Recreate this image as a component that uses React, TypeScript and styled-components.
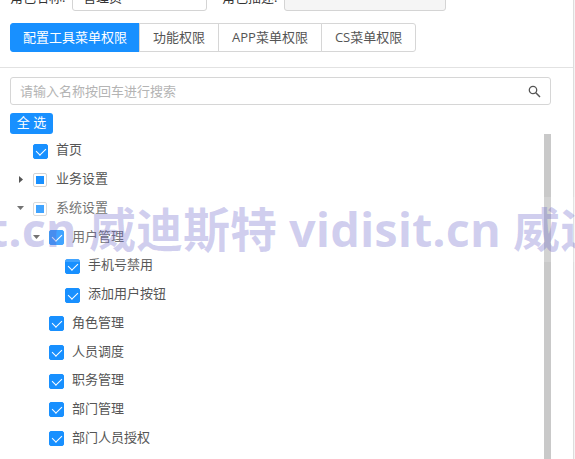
import React, { useEffect, useRef, useState } from "react";
import styled, { createGlobalStyle } from "styled-components";

const GlobalStyle = createGlobalStyle`
  * { box-sizing: border-box; }
  body {
    margin: 0;
    background: #fff;
    color: #555;
    font: 13px/20px "Open Sans", "Noto Sans CJK SC", sans-serif;
  }
  button, input { font: inherit; color: inherit; }
`;

const Page = styled.main`
  position: relative;
  display: flex;
  height: 100vh;
  overflow: hidden;
`;

const Panel = styled.div`
  flex: 1;
  min-width: 0;
  display: flex;
  flex-direction: column;
  border-right: 1px solid #ddd;
`;

const Edge = styled.div`
  width: 1px;
  background: #f4f4f4;
`;

const FormRow = styled.div`
  display: flex;
  align-items: flex-end;
  height: 11px;
  padding-left: 10px;
  gap: 15px;
`;

const Field = styled.label<{ $width: number }>`
  display: flex;
  align-items: center;
  gap: 4px;
  color: #333;

  input {
    width: ${(p) => p.$width}px;
    height: 28px;
    padding: 0 10px 2px;
    border: 1px solid #d4d4d4;
    border-radius: 3px;
    background: #fff;
  }
  input:disabled { background: #f5f5f5; }
`;

const FieldName = styled.span`
  width: 58px;
  white-space: nowrap;
`;

const Tabs = styled.div`
  display: flex;
  padding: 12px 10px 15px;
  border-bottom: 1px solid #e2e2e2;
`;

const Tab = styled.button<{ $active?: boolean }>`
  height: 29px;
  padding: 0 13px 2px;
  border: 1px solid ${(p) => (p.$active ? "#1890ff" : "#d6d6d6")};
  margin-left: -1px;
  background: ${(p) => (p.$active ? "#1890ff" : "#fff")};
  color: ${(p) => (p.$active ? "#fff" : "#555")};
  line-height: 20px;
  white-space: nowrap;
  &:first-child {
    border-radius: 3px 0 0 3px;
    margin-left: 0;
    padding: 0 12px 2px;
  }
  &:last-child { border-radius: 0 3px 3px 0; }
`;

const Content = styled.section`
  flex: 1;
  min-height: 0;
  display: flex;
  flex-direction: column;
  align-items: flex-start;
  padding: 9px 22px 0 10px;
`;

const SearchBox = styled.div`
  display: flex;
  align-items: center;
  align-self: stretch;
  height: 28px;
  padding: 0 9px;
  border: 1px solid #d6d6d6;
  border-radius: 3px;

  input {
    flex: 1;
    min-width: 0;
    padding: 0;
    border: 0;
    outline: 0;
    background: none;
  }
  input::placeholder { color: #b4b4b4; opacity: 1; }
  button {
    display: flex;
    padding: 0;
    border: 0;
    background: none;
  }
`;

const SelectAll = styled.button`
  width: 43px;
  height: 21px;
  margin-top: 8px;
  padding: 0 0 2px;
  border: 0;
  border-radius: 3px;
  background: #1890ff;
  color: #fff;
  line-height: 19px;
`;

const TreeArea = styled.div`
  flex: 1;
  min-height: 0;
  align-self: stretch;
  display: flex;
`;

const Tree = styled.ul`
  flex: 1;
  display: flex;
  flex-direction: column;
  margin: 0;
  padding: 2px 0 7px;
  list-style: none;
`;

const ScrollThumb = styled.div`
  width: 7px;
  background: #c9c9c9;
`;

const Row = styled.li<{ $level: number }>`
  flex: 1;
  min-height: 28px;
  display: flex;
  align-items: center;
  padding-left: ${(p) => p.$level * 16 + 6}px;
`;

const Toggle = styled.button`
  display: flex;
  width: 17px;
  padding: 0;
  border: 0;
  background: none;
`;

const Spacer = styled.span`
  width: 17px;
`;

const Option = styled.label`
  display: flex;
  align-items: center;
  gap: 8px;
  padding-bottom: 2px;
`;

const Check = styled.input`
  appearance: none;
  position: relative;
  width: 15px;
  height: 15px;
  margin: 4px 0 0;
  border: 1px solid #d4d4d4;
  border-radius: 2px;
  background: #fff;

  &:checked { background: #1890ff; border-color: #1890ff; }
  &:checked::after {
    content: "";
    position: absolute;
    left: 4px;
    top: 1px;
    width: 5px;
    height: 8px;
    border: solid #fff;
    border-width: 0 1px 1px 0;
    transform: rotate(45deg);
  }
  &:indeterminate { width: 14px; height: 14px; margin-right: 1px; }
  &:indeterminate::after {
    content: "";
    position: absolute;
    inset: 2px;
    background: #1890ff;
  }
`;

const Watermark = styled.div`
  position: absolute;
  top: 197px;
  left: 0;
  right: 0;
  height: 65px;
  display: flex;
  justify-content: center;
  padding-right: 9px;
  overflow: hidden;
  pointer-events: none;
  background: rgba(255, 255, 255, 0.18);
  color: rgba(88, 84, 196, 0.28);
  font: bold 47px/65px "Open Sans", "Noto Sans CJK SC", sans-serif;
  white-space: pre;
`;

type Item = { label: string; level: number; open?: boolean; partial?: boolean };

const items: Item[] = [
  { label: "首页", level: 0 },
  { label: "业务设置", level: 0, open: false, partial: true },
  { label: "系统设置", level: 0, open: true, partial: true },
  { label: "用户管理", level: 1, open: true },
  { label: "手机号禁用", level: 2 },
  { label: "添加用户按钮", level: 2 },
  { label: "角色管理", level: 1 },
  { label: "人员调度", level: 1 },
  { label: "职务管理", level: 1 },
  { label: "部门管理", level: 1 },
  { label: "部门人员授权", level: 1 },
];

const tabs = ["配置工具菜单权限", "功能权限", "APP菜单权限", "CS菜单权限"];

function TreeRow({ item }: { item: Item }) {
  const box = useRef<HTMLInputElement>(null);
  useEffect(() => {
    if (box.current) box.current.indeterminate = !!item.partial;
  }, [item.partial]);

  return (
    <Row $level={item.level}>
      {item.open === undefined ? (
        <Spacer />
      ) : (
        <Toggle aria-label={item.label} aria-expanded={item.open}>
          <svg width="9" height="9" viewBox="0 0 9 9" fill="#555">
            <path d={item.open ? "M1 3h7L4.500 7z" : "M3 1v7L7 4.500z"} />
          </svg>
        </Toggle>
      )}
      <Option>
        <Check ref={box} type="checkbox" defaultChecked={!item.partial} />
        {item.label}
      </Option>
    </Row>
  );
}

export default function App() {
  const [active, setActive] = useState(0);
  return (
    <>
      <GlobalStyle />
      <Page>
        <Panel>
          <FormRow>
            <Field $width={135}>
              <FieldName>角色名称:</FieldName>
              <input type="text" defaultValue="管理员" />
            </Field>
            <Field $width={162}>
              <FieldName>角色描述:</FieldName>
              <input type="text" disabled />
            </Field>
          </FormRow>
          <Tabs role="tablist">
            {tabs.map((name, i) => (
              <Tab
                key={name}
                role="tab"
                aria-selected={i === active}
                $active={i === active}
                onClick={() => setActive(i)}
              >
                {name}
              </Tab>
            ))}
          </Tabs>
          <Content>
            <SearchBox>
              <input
                type="text"
                aria-label="搜索"
                placeholder="请输入名称按回车进行搜索"
              />
              <button aria-label="搜索">
                <svg width="13" height="13" viewBox="0 0 13 13" fill="none" stroke="#555">
                  <circle cx="5" cy="5" r="3.700" strokeWidth="1.300" />
                  <path d="M7.800 7.800L12 12" strokeWidth="1.500" />
                </svg>
              </button>
            </SearchBox>
            <SelectAll>全 选</SelectAll>
            <TreeArea>
              <Tree>
                {items.map((item) => (
                  <TreeRow key={item.label} item={item} />
                ))}
              </Tree>
              <ScrollThumb />
            </TreeArea>
          </Content>
        </Panel>
        <Edge />
        <Watermark aria-hidden="true">
          vidisit.cn 威迪斯特 vidisit.cn 威迪斯特
        </Watermark>
      </Page>
    </>
  );
}
